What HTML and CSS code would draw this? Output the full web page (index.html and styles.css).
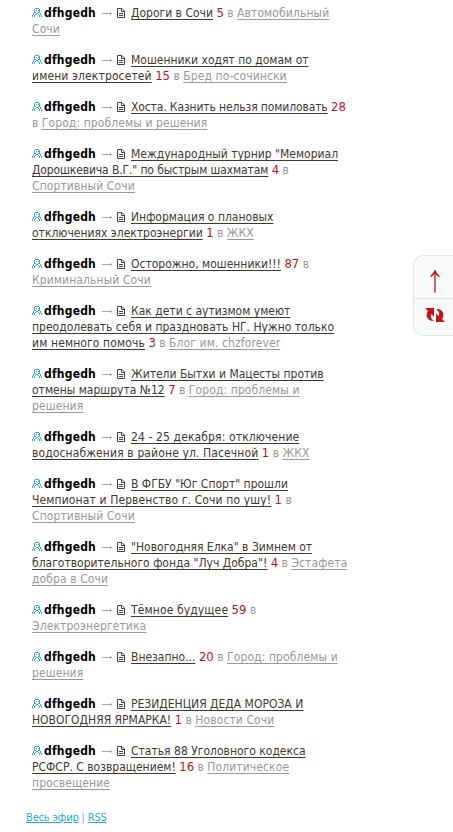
FILE: index.html
```
<!DOCTYPE html>
<html lang="ru">
<head>
    <meta charset="UTF-8">
    <title>Прямой эфир</title>
    <link rel="stylesheet" href="styles.css">
</head>
<body>
    <svg class="sprite" width="0" height="0">
        <symbol id="user" viewBox="0 0 10 9">
            <path d="M3 .5h4M2.500 1v4M7.500 1v4M4 2.500h1M6 2.500h1M3 4.500h1M6 4.500h1M4 5.500h2M1.500 5v2M8.500 5v2M.5 7v2M9.500 7v2M3.500 6v1M6.500 6v1M2.500 7v2M7.500 7v2" fill="none" stroke="#35acd0"/>
        </symbol>
        <symbol id="arrow" viewBox="0 0 11 5">
            <path d="M0 2.500h10M8.500 1v3" fill="none" stroke="#aaa"/>
        </symbol>
        <symbol id="doc" viewBox="0 0 8 10">
            <path d="M.5.500h4.500l2.500 2.500v6.500h-7zM4.500 1v2.500h3M2 5.500h4M2 7.500h4" fill="none" stroke="#444"/>
        </symbol>
    </svg>

    <ul class="stream">
        <li>
            <svg class="user"><use href="#user"/></svg><a class="author">dfhgedh</a><svg class="arrow"><use href="#arrow"/></svg><svg class="doc"><use href="#doc"/></svg><a class="topic">Дороги в Сочи</a> <span class="count">5</span> в <a class="blog">Автомобильный<br>Сочи</a>
        </li>
        <li>
            <svg class="user"><use href="#user"/></svg><a class="author">dfhgedh</a><svg class="arrow"><use href="#arrow"/></svg><svg class="doc"><use href="#doc"/></svg><a class="topic">Мошенники ходят по домам от<br><span class="wide">имени электросетей</span></a> <span class="count">15</span> в <a class="blog">Бред по-сочински</a>
        </li>
        <li>
            <svg class="user"><use href="#user"/></svg><a class="author">dfhgedh</a><svg class="arrow"><use href="#arrow"/></svg><svg class="doc"><use href="#doc"/></svg><a class="topic"><span class="tight">Хоста. Казнить нельзя помиловать</span></a> <span class="count">28</span><br>в <a class="blog">Город: проблемы и решения</a>
        </li>
        <li>
            <svg class="user"><use href="#user"/></svg><a class="author">dfhgedh</a><svg class="arrow"><use href="#arrow"/></svg><svg class="doc"><use href="#doc"/></svg><a class="topic">Международный турнир "Мемориал<br><span class="tight">Дорошкевича В.Г." по быстрым шахматам</span></a> <span class="count">4</span> в<br><a class="blog">Спортивный Сочи</a>
        </li>
        <li>
            <svg class="user"><use href="#user"/></svg><a class="author">dfhgedh</a><svg class="arrow"><use href="#arrow"/></svg><svg class="doc"><use href="#doc"/></svg><a class="topic">Информация о плановых<br>отключениях электроэнергии</a> <span class="count">1</span> в <a class="blog">ЖКХ</a>
        </li>
        <li>
            <svg class="user"><use href="#user"/></svg><a class="author">dfhgedh</a><svg class="arrow"><use href="#arrow"/></svg><svg class="doc"><use href="#doc"/></svg><a class="topic">Осторожно, мошенники!!!</a> <span class="count">87</span> в<br><a class="blog">Криминальный Сочи</a>
        </li>
        <li>
            <svg class="user"><use href="#user"/></svg><a class="author">dfhgedh</a><svg class="arrow"><use href="#arrow"/></svg><svg class="doc"><use href="#doc"/></svg><a class="topic">Как дети с аутизмом умеют<br>преодолевать себя и праздновать НГ. Нужно только<br><span class="wide">им немного помочь</span></a> <span class="count">3</span> в <a class="blog">Блог им. chzforever</a>
        </li>
        <li>
            <svg class="user"><use href="#user"/></svg><a class="author">dfhgedh</a><svg class="arrow"><use href="#arrow"/></svg><svg class="doc"><use href="#doc"/></svg><a class="topic">Жители Бытхи и Мацесты против<br>отмены маршрута №12</a> <span class="count">7</span> в <a class="blog">Город: проблемы и<br>решения</a>
        </li>
        <li>
            <svg class="user"><use href="#user"/></svg><a class="author">dfhgedh</a><svg class="arrow"><use href="#arrow"/></svg><svg class="doc"><use href="#doc"/></svg><a class="topic"><span class="wide">24 - 25 декабря: отключение<br>водоснабжения в районе ул. Пасечной</span></a> <span class="count">1</span> в <a class="blog">ЖКХ</a>
        </li>
        <li>
            <svg class="user"><use href="#user"/></svg><a class="author">dfhgedh</a><svg class="arrow"><use href="#arrow"/></svg><svg class="doc"><use href="#doc"/></svg><a class="topic">В ФГБУ "Юг Спорт" прошли<br><span class="wide">Чемпионат и Первенство г. Сочи по ушу!</span></a> <span class="count">1</span> в<br><a class="blog">Спортивный Сочи</a>
        </li>
        <li>
            <svg class="user"><use href="#user"/></svg><a class="author">dfhgedh</a><svg class="arrow"><use href="#arrow"/></svg><svg class="doc"><use href="#doc"/></svg><a class="topic">"Новогодняя Елка" в Зимнем от<br>благотворительного фонда "Луч Добра"!</a> <span class="count">4</span> в <a class="blog">Эстафета<br>добра в Сочи</a>
        </li>
        <li>
            <svg class="user"><use href="#user"/></svg><a class="author">dfhgedh</a><svg class="arrow"><use href="#arrow"/></svg><svg class="doc"><use href="#doc"/></svg><a class="topic"><span class="wide">Тёмное будущее</span></a> <span class="count">59</span> в<br><a class="blog">Электроэнергетика</a>
        </li>
        <li>
            <svg class="user"><use href="#user"/></svg><a class="author">dfhgedh</a><svg class="arrow"><use href="#arrow"/></svg><svg class="doc"><use href="#doc"/></svg><a class="topic">Внезапно...</a> <span class="count">20</span> в <a class="blog">Город: проблемы и<br>решения</a>
        </li>
        <li>
            <svg class="user"><use href="#user"/></svg><a class="author">dfhgedh</a><svg class="arrow"><use href="#arrow"/></svg><svg class="doc"><use href="#doc"/></svg><a class="topic">РЕЗИДЕНЦИЯ ДЕДА МОРОЗА И<br>НОВОГОДНЯЯ ЯРМАРКА!</a> <span class="count">1</span> в <a class="blog">Новости Сочи</a>
        </li>
        <li>
            <svg class="user"><use href="#user"/></svg><a class="author">dfhgedh</a><svg class="arrow"><use href="#arrow"/></svg><svg class="doc"><use href="#doc"/></svg><a class="topic">Статья 88 Уголовного кодекса<br>РСФСР. С возвращением!</a> <span class="count">16</span> в <a class="blog">Политическое<br>просвещение</a>
        </li>
    </ul>

    <div class="footer"><a>Весь эфир</a> | <a>RSS</a></div>

    <div class="toolbar">
        <div class="tool">
            <svg width="12" height="24" viewBox="0 0 12 24"><path d="M6 23.500V2M1.500 7.500C4 6 5.500 4 6 1.500C6.500 4 8 6 10.500 7.500" fill="none" stroke="#c41212" stroke-width="1.300"/></svg>
        </div>
        <div class="tool">
            <svg width="20" height="14" viewBox="0 0 20 14"><path d="M0 0h9v8.500L6.500 6C5 8.500 6 11 9 13C3 13.500-.5 8 3 3zM20 14h-9V5.500L13.500 8C15 5.500 14 3 11 1C17 .5 20.500 6 17 11z" fill="#c41212"/></svg>
        </div>
    </div>
</body>
</html>
```
FILE: styles.css
```
* {
    margin: 0;
    padding: 0;
    box-sizing: border-box;
}

body {
    height: 832px;
    overflow: hidden;
    background: #fff;
    font-family: "DejaVu Sans Condensed", "DejaVu Sans", sans-serif;
    font-size: 12px;
    line-height: 16px;
    color: #999;
}

.sprite {
    position: absolute;
}

.stream {
    padding: 5px 0 0 32px;
    list-style: none;
    white-space: nowrap;
}

.stream li {
    margin-bottom: 15px;
}

.user {
    width: 10px;
    height: 9px;
    margin-right: 2px;
    vertical-align: 0;
}

.author {
    display: inline-block;
    width: 58px;
    letter-spacing: 0.2px;
    font-weight: bold;
    color: #000;
}

.arrow {
    width: 11px;
    height: 5px;
    margin-right: 4px;
    vertical-align: 1px;
}

.doc {
    width: 8px;
    height: 10px;
    margin-right: 6px;
    vertical-align: -1px;
}

.topic {
    color: #3d3a34;
    text-decoration: underline;
    text-underline-offset: 2px;
}

.wide {
    letter-spacing: 0.12px;
}

.tight {
    letter-spacing: -0.12px;
}

.count {
    font-size: 13px;
    line-height: 1;
    color: #c41212;
}

.blog {
    letter-spacing: 0.1px;
    text-decoration: underline;
    text-underline-offset: 2px;
}

.footer {
    padding: 4px 0 0 26px;
    font-size: 11px;
    letter-spacing: -0.15px;
}

.footer a {
    color: #1db0d0;
    text-decoration: underline;
}

.toolbar {
    position: absolute;
    top: 255px;
    right: 0;
    width: 40px;
    height: 81px;
    border: 1px solid #e2e6e6;
    border-right: 0;
    border-radius: 10px 0 0 10px;
    background: #f9fbfa;
}

.tool {
    display: flex;
    align-items: center;
    justify-content: center;
    height: 31px;
    padding-left: 3px;
}

.tool:first-child {
    height: 43px;
    padding-top: 7px;
    border-bottom: 1px solid #e2e6e6;
}
```
